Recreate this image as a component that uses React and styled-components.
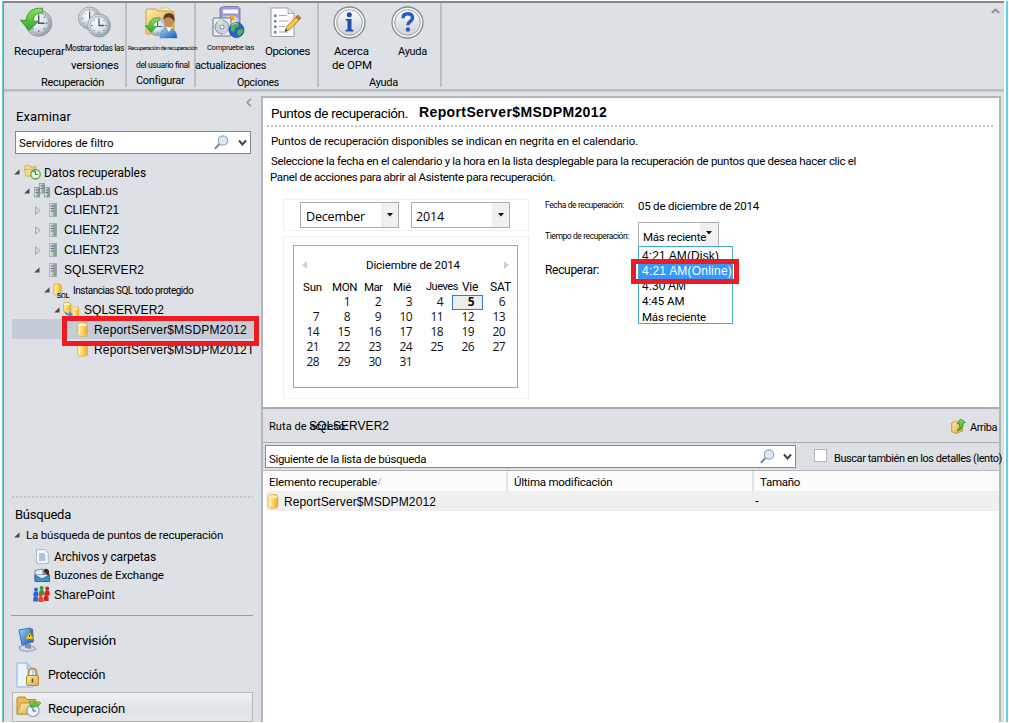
import React from "react";
import styled, { createGlobalStyle, css } from "styled-components";

const Global = createGlobalStyle`
  * { box-sizing: border-box; }
  html, body { margin: 0; padding: 0; background: #fff; overflow: hidden; }
  body { font-family: Roboto, "Liberation Sans", sans-serif; color: #000; }
  svg { display: block; flex: none; }
`;

const FONTS = {
  a: '"Liberation Sans", sans-serif',
  o: '"Open Sans", sans-serif',
  r: 'Roboto, sans-serif',
};

/* One line of text: $s size, $w reserved width, $ls tracking, $x / $y margins */
const T = styled.span`
  display: block; flex: none; white-space: nowrap;
  font-family: ${p => FONTS[p.$f || "r"]};
  font-size: ${p => p.$s || 12}px;
  font-weight: ${p => p.$b ? 700 : 400};
  letter-spacing: ${p => p.$ls || 0}px;
  height: ${p => p.$h || 16}px; line-height: ${p => p.$h || 16}px;
  margin-left: ${p => p.$x || 0}px; margin-top: ${p => p.$y || 0}px;
  width: ${p => p.$w}px;
`;

const Frame = styled.div`
  width: 1009px; height: 722px; padding: 1px 3px 0 2px; background: #fff; display: flex;
`;
const Edge = styled.div`width: ${p => p.$w}px; background: ${p => p.$c}; flex: none;`;
const Win = styled.div`
  width: 1001px; height: 721px; border-left: 1px solid #8b9296; border-top: 2px solid #85898a;
  background: #dde0e5; display: flex; flex-direction: column; flex: none;
`;
const Ribbon = styled.div`display: flex; height: 86px; flex: none;`;
const Group = styled.div`
  width: ${p => p.$w}px; height: 84px; border-right: 2px solid #bcbfc3; flex: none;
`;
const Items = styled.div`display: flex; height: 70px;`;
const Item = styled.div`
  width: ${p => p.$w}px; flex: none; display: flex; flex-direction: column;
  & > svg { margin: 3px 0 0 ${p => p.$i}px; }
`;
const RibbonFold = styled.div`margin-left: auto; padding: 5px 4px;`;
const Rule = styled.div`height: 3px; background: linear-gradient(#b3b5b8, #bec0c3 60%, #cfd2d6); flex: none;`;
const Main = styled.div`display: flex; flex: 1; min-height: 0;`;
const Side = styled.div`width: 257px; flex: none; display: flex; flex-direction: column;`;
const Fold = styled.div`height: 16px; padding: 6px 0 0 242px;`;
const Combo = styled.div`
  display: flex; align-items: center; background: #fff; border: 1px solid ${p => p.$c || "#85898c"};
  width: ${p => p.$w}px; height: ${p => p.$h}px; margin-left: ${p => p.$x || 0}px; flex: none; position: relative;
`;
const FilterCombo = styled(Combo)`margin-top: 6px;`;
const Tail = styled.div`margin-left: auto; display: flex; align-items: center; gap: ${p => p.$g || 0}px; padding-right: ${p => p.$p || 0}px;`;
const DropCell = styled.div`
  margin-left: auto; width: 17px; height: 100%; background: #f0f0f0;
  display: flex; align-items: center; justify-content: center;
`;
const TimeCell = styled(DropCell)`margin-left: -6px; width: 18px; padding-bottom: 3px;`;
const OverText = styled(T)`position: relative; z-index: 1;`;
const Tree = styled.div`margin-top: 9px; height: 333px; flex: none;`;
const Row = styled.div`
  height: ${p => p.$h || 20}px; display: flex; align-items: center; padding-left: ${p => p.$p}px; position: relative; flex: none;
  ${p => p.$sel && css`background: #c5ccd8; margin-left: 8px; padding-left: ${p.$p - 8}px; margin-right: 3px;`}
  ${p => p.$clip && css`overflow: hidden; margin-right: 8px;`}
`;
const RedBox = styled.div`
  position: absolute; border: 5px solid #ed1c24; z-index: 2;
  left: ${p => p.$l}px; top: ${p => p.$t}px; width: ${p => p.$w}px; height: ${p => p.$h}px;
`;
const Dots = styled.div`
  height: 2px; flex: none; margin: ${p => p.$m};
  background: repeating-linear-gradient(90deg, #c3c3c6 0 2px, transparent 2px 4px);
`;
const Line = styled.div`height: 1px; background: #999b9e; margin: ${p => p.$m}; flex: none;`;
const Nav = styled.div`
  height: ${p => p.$h || 34}px; margin: 0 8px 0 8px; display: flex; align-items: center; padding-left: ${p => p.$on ? 3 : 4}px; flex: none;
  ${p => p.$on && css`border: 1px solid #b4b8bd; background: linear-gradient(#f0f2f4, #dfe2e6 60%, #e6e8eb);`}
`;
const Panel = styled.div`
  margin-top: 4px; width: 740px; border: solid #b2b5ba; border-width: 2px 2px 0 2px; background: #fff;
  display: flex; flex-direction: column; flex: none;
`;
const Title = styled.div`height: 27px; display: flex; align-items: center; flex: none;`;
const Detail = styled.div`height: 210px; display: flex; flex: none; margin-top: 12px;`;
const DateCol = styled.div`width: 246px; margin: 2px 0 0 20px; display: flex; flex-direction: column; gap: 5px; flex: none;`;
const Soft = styled.div`border: 1px solid #f0f0f0; height: ${p => p.$h}px; padding: ${p => p.$p}; display: flex; gap: 12px;`;
const Cal = styled.div`width: 225px; height: 143px; border: 1px solid #a5a5a5; padding-top: 11px;`;
const CalHead = styled.div`display: flex; align-items: center; height: 16px; padding: 0 8px;`;
const Week = styled.div`display: flex; height: 16px; margin-top: 6px; padding-left: 9px;`;
const Days = styled.div`
  display: grid; grid-template-columns: repeat(7, 31px); grid-auto-rows: 15px; margin-left: 2px;
`;
const Day = styled.div`
  font: 400 12px/14px "Open Sans", sans-serif; letter-spacing: -.6px; text-align: right; padding-right: 8px; color: #111;
  ${p => p.$on && css`font-weight: 700; border: 1px solid #2b7fd3; background: #eee; line-height: 12px; padding-right: 8px; margin: 0 -1px 0 1px;`}
`;
const Form = styled.div`margin-left: 16px; display: flex; flex-direction: column;`;
const Field = styled.div`display: flex; height: ${p => p.$h}px; align-items: flex-start;`;
const List = styled.div`
  position: absolute; left: -1px; top: 23px; width: 95px; height: 78px; border: 1px solid #45a9cb; background: #fff; padding-top: 2px; z-index: 1;
`;
const Opt = styled.div`
  height: 15px; display: flex; padding-left: 3px; ${p => p.$on && css`background: #3399ff; color: #fff;`}
`;
const PathBar = styled.div`
  height: 36px; flex: none; border-top: 2px solid #a9abae; border-bottom: 1px solid #a9abb0; background: #dde0e5;
  display: flex; align-items: center;
`;
const SearchBar = styled.div`height: 28px; flex: none; background: #dde0e5; display: flex; align-items: center; padding-left: 2px; border-bottom: 1px solid #b4b7bb;`;
const Check = styled.div`width: 13px; height: 13px; border: 1px solid #b4b7ba; background: #fff; margin: -3px 0 0 18px; flex: none;`;
const Grid = styled.div`
  display: grid; grid-template-columns: 245px 246px 1fr; height: 20px; flex: none; align-items: center;
  background: ${p => p.$bg}; ${p => p.$m && css`margin-left: 3px; grid-template-columns: 242px 246px 1fr;`}
`;
const Cell = styled.div`height: 100%; display: flex; align-items: center; border-right: ${p => p.$l ? "2px solid #e2e2e2" : 0};`;
const Gap = styled.div`width: ${p => p.$w}px; flex: none;`;
const Defs = styled.svg`position: absolute;`;

/* ---------- icons ---------- */
const Grads = () => (
  <Defs width="0" height="0">
    <defs>
      <radialGradient id="face" cx=".4" cy=".35" r=".75"><stop offset="0" stopColor="#fff" /><stop offset=".6" stopColor="#d9e2ea" /><stop offset="1" stopColor="#a9b6c1" /></radialGradient>
      <linearGradient id="rim" x2="1" y2="1"><stop stopColor="#eef0f2" /><stop offset="1" stopColor="#8b959d" /></linearGradient>
      <linearGradient id="grn" x2="0" y2="1"><stop stopColor="#8fe05a" /><stop offset="1" stopColor="#36a52c" /></linearGradient>
      <linearGradient id="fold" x2="1" y2="1"><stop stopColor="#fdeaa6" /><stop offset="1" stopColor="#e0a93e" /></linearGradient>
      <linearGradient id="cyl" x2="1" y2="0"><stop stopColor="#fff0a8" /><stop offset=".45" stopColor="#ffd96f" /><stop offset="1" stopColor="#f2a82c" /></linearGradient>
      <linearGradient id="srv" x2="1" y2="0"><stop stopColor="#eef1f3" /><stop offset="1" stopColor="#7f8a94" /></linearGradient>
      <linearGradient id="blu" x2="1" y2="1"><stop stopColor="#9ed8ff" /><stop offset="1" stopColor="#1557b8" /></linearGradient>
      <linearGradient id="btn" x2="0" y2="1"><stop stopColor="#fff" /><stop offset=".5" stopColor="#e2e5e8" /><stop offset="1" stopColor="#cfd4d8" /></linearGradient>
    </defs>
  </Defs>
);
const Clock = ({ x = 0, y = 0, k = 1 }) => (
  <g transform={`translate(${x} ${y}) scale(${k})`}>
    <circle cx="12" cy="12" r="11.5" fill="url(#rim)" stroke="#8b959e" strokeWidth=".8" />
    <circle cx="12" cy="12" r="9" fill="url(#face)" stroke="#98a4ae" strokeWidth=".7" />
    <path d="M12 4.2v1.6M12 18.2v1.6M4.2 12h1.6M18.2 12h1.6M6.5 6.5l1 1M17.5 17.5l-1-1M17.5 6.5l-1 1M6.5 17.5l1-1" stroke="#66717b" strokeWidth="1" />
    <path d="M12 5.8V12h5.2" fill="none" stroke="#47566a" strokeWidth="1.3" />
  </g>
);
const GreenArrow = ({ x = 0, y = 0, k = 1 }) => (
  <path transform={`translate(${x} ${y}) scale(${k})`} d="M20.5 1.2C11 .4 6.5 4.5 5.6 12.2L.4 12l7.8 9.4L17 12.9l-5.2-.2c.3-4.4 2.8-7.3 8.9-7.6z" fill="url(#grn)" stroke="#238a1d" strokeWidth=".7" />
);
const IcoRecover = () => <svg width="33" height="33"><Clock x={5} y={3.5} k={1.14} /><GreenArrow x={0} y={1} k={1.1} /></svg>;
const IcoClocks = () => <svg width="34" height="33"><Clock x={0} y={.5} k={.97} /><Clock x={9} y={7.5} k={1} /></svg>;
const IcoUserFolder = () => (
  <svg width="34" height="33">
    <path d="M2 5q0-2 2-2h8l2 2h14q2 0 2 2v21H2z" fill="url(#fold)" stroke="#d2a045" />
    <path d="M15 2h9l2 3" fill="#fff3c4" stroke="#dfb558" strokeWidth=".8" />
    <Clock x={4} y={11} k={.8} /><GreenArrow x={1} y={11} k={.72} />
    <path d="M16 32q0-9 8-10 9 1 9 10z" fill="url(#blu)" stroke="#4a7faa" strokeWidth=".5" />
    <path d="M22 21l3 5 3-5z" fill="#fff" />
    <ellipse cx="25" cy="15" rx="5" ry="6.5" fill="#c98d58" />
    <path d="M19.5 14q-.5-7 5.5-7 6.500 0 5.500 9-2-4-6-5-3 0-5 3z" fill="#5d3a22" />
  </svg>
);
const IcoUpdate = () => (
  <svg width="34" height="33">
    <path d="M9 2l4-1.500h14l2 2v17H9z" fill="#9a9fcd" stroke="#6a6fa6" strokeWidth=".8" /><path d="M12 3.500h15v4H12z" fill="#f4f6ff" />
    <path d="M11 9h12l5 3v10H11z" fill="#c4c9e4" stroke="#7478ab" strokeWidth=".6" /><path d="M17 10h7l1 8h-6z" fill="#f6e4b4" /><circle cx="21" cy="12" r="2.800" fill="#e9a83c" />
    <rect x="2" y="12" width="18" height="18" rx="1" fill="#eceff4" stroke="#6c7280" />
    <circle cx="11" cy="21" r="7" fill="#c5cfda" stroke="#858f9b" /><path d="M11 21l-5-5a7 7 0 0 1 6-2z" fill="#c6eccb" /><path d="M11 21l6 4a7 7 0 0 1-5 3z" fill="#e6c8e8" /><circle cx="11" cy="21" r="2" fill="#fff" stroke="#7a8490" />
    <circle cx="25.500" cy="24" r="7.500" fill="#2a62c8" stroke="#1b428f" strokeWidth=".7" />
    <path d="M20 20q4-4 7-3l1 3-4 2-1 4-3-1zM27 24l5-1q0 5-4 7l-2-3z" fill="#50b848" /><path d="M20 19.500q3-3 6-2" stroke="#a9cdf9" fill="none" />
  </svg>
);
const IcoOptions = () => (
  <svg width="34" height="33">
    <path d="M3 2h17l6 5v23.500H3z" fill="#fdfdfe" stroke="#9aa2ab" /><path d="M20 2v5.500h6" fill="#dfe4ea" stroke="#9aa2ab" strokeWidth=".8" />
    <path d="M11 9.500h8M11 15h9M11 20.500h6M11 26h9" stroke="#a4acb5" strokeWidth="1.200" />
    <path d="M6 8.500h2.500v2.500H6zM6 14h2.500v2.500H6zM6 19.500h2.500v2.500H6zM6 25h2.500v2.500H6z" fill="#7580a0" />
    <path d="M17 25.500l1.800-5L29.500 9.500l3 3L22 23.500z" fill="#f4c64c" stroke="#99712a" strokeWidth=".8" />
    <path d="M28 11l1.800-2 3 3-1.900 2z" fill="#d86a5c" stroke="#8f4038" strokeWidth=".5" /><path d="M17 25.500l.8-2.400 1.600 1.500z" fill="#222" />
  </svg>
);
const RoundBtn = ({ children }) => (
  <svg width="33" height="33">
    <circle cx="16.500" cy="16.500" r="15.500" fill="#f4f5f6" stroke="#878b8f" strokeWidth="1.300" />
    <circle cx="16.500" cy="16.500" r="12.800" fill="url(#btn)" stroke="#9ba0a5" />{children}
  </svg>
);
const IcoInfo = () => <RoundBtn><circle cx="16.300" cy="8.800" r="2.500" fill="#1f4fae" /><path d="M12.800 13h5.700v10.800h1.900v1.700h-7.800v-1.700h1.900v-9.100h-1.700z" fill="#1f4fae" /></RoundBtn>;
const IcoHelp = () => <RoundBtn><path d="M12 12.300q0-4.500 4.700-4.500 4.800 0 4.800 4 0 2.300-2.700 3.900-1.900 1.100-1.900 3.600" fill="none" stroke="#2a5cbc" strokeWidth="3.400" /><circle cx="16.900" cy="23.500" r="2.200" fill="#2a5cbc" /></RoundBtn>;
const Mag = () => (
  <svg width="15" height="15"><path d="M6 8.500L1.400 13.300" stroke="#85898e" strokeWidth="2" strokeLinecap="round" /><circle cx="9" cy="5.500" r="4.700" fill="#dcebfa" stroke="#9aaabb" strokeWidth="1.200" /></svg>
);
const Chev = () => <svg width="9" height="8"><path d="M1 1.500l3.500 4 3.500-4" fill="none" stroke="#3f4347" strokeWidth="2" /></svg>;
const Down = () => <svg width="6" height="4"><path d="M0 0h6L3 3.600z" fill="#111" /></svg>;
const Tri = ({ open }) => open
  ? <svg width="6" height="6"><path d="M5.500 .3v5.200H.2z" fill="#4a4a4a" /></svg>
  : <svg width="6" height="9"><path d="M.6 .9v7.200l4.300-3.600z" fill="none" stroke="#a0a3a7" /></svg>;
const Server = () => (
  <svg width="8" height="14"><rect x=".5" y=".5" width="7" height="13" fill="url(#srv)" stroke="#8b959d" strokeWidth=".6" /><path d="M1.500 3h4M1.500 5.500h4M1.500 8h4" stroke="#69737b" /><rect x="4.500" y="10.500" width="2.500" height="2" fill="#4ed02c" /></svg>
);
const Domain = () => (
  <svg width="16" height="15">
    {[[5.5, 0], [.5, 4], [10.5, 4]].map(([x, y], i) => <g key={i} transform={`translate(${x} ${y})`}><rect x="0" y=".5" width="5" height="9.500" fill="url(#srv)" stroke="#75808a" strokeWidth=".6" /><path d="M1 3h3M1 5.500h3" stroke="#69737b" /><rect x="2.500" y="7.800" width="2" height="1.700" fill="#4ed02c" /></g>)}
  </svg>
);
const FolderClock = () => (
  <svg width="17" height="16"><path d="M.6 3q0-1.500 1.500-1.500h3l1.200 1.300H12V12H2z" fill="url(#fold)" stroke="#cf9a3c" strokeWidth=".7" /><path d="M.6 5.500h9L12 12H2z" fill="#fbd97f" stroke="#cf9a3c" strokeWidth=".5" /><circle cx="11.500" cy="10.300" r="4.700" fill="#e4f2e0" stroke="#5f9d4f" strokeWidth="1.300" /><path d="M11.500 7.500v3h2.300" fill="none" stroke="#3f7a34" /><path d="M7 8l5-2.500-.5 3z" fill="#49b038" /></svg>
);
const CYL = "M.6 2.800q0-2.200 4.900-2.200t4.900 2.200v9.400q0 2.200-4.900 2.200T.6 12.200z";
const Cyl = ({ w = 11, h = 15 }) => (
  <svg width={w} height={h} viewBox="0 0 11 15"><path d={CYL} fill="url(#cyl)" stroke="#e5a437" strokeWidth=".7" /><ellipse cx="5.500" cy="2.700" rx="4.300" ry="1.500" fill="#fff2b8" /><path d="M2.500 5.500v7" stroke="#fff6cf" strokeWidth="1.200" /></svg>
);
const SqlIco = () => (
  <svg width="17" height="15"><path d="M.8 2.200q0-1.500 3.700-1.500t3.700 1.500v8.500q0 1.500-3.700 1.500T.8 10.700z" fill="url(#cyl)" stroke="#dc9a2a" strokeWidth=".7" /><text x="3.800" y="14.500" fontFamily="Liberation Sans" fontWeight="700" fontSize="6.800" textLength="12.800" stroke="#dde0e5" strokeWidth="1" paintOrder="stroke" fill="#111">SQL</text></svg>
);
const DbPair = () => (
  <svg width="17" height="15"><g transform="scale(.76)"><path d={CYL} fill="url(#cyl)" stroke="#e5a437" /><ellipse cx="5.500" cy="2.800" rx="4" ry="1.400" fill="#fff2b8" /></g><g transform="translate(8.500 4.500) scale(.7)"><path d={CYL} fill="url(#cyl)" stroke="#e5a437" /><ellipse cx="5.500" cy="2.800" rx="4" ry="1.400" fill="#fff2b8" /></g><path d="M1.500 8q1 4 5 3.500v-2l3.500 3-3.500 2.500v-1.500Q1 13.500 1.500 8z" fill="#2f8fdf" /></svg>
);
const DocIco = () => <svg width="13" height="15"><path d="M.6 .6h8l3.600 3.400v10.400H.6z" fill="#fafcff" stroke="#9aa7b8" strokeWidth=".8" /><path d="M3 5h6M3 7h6.500M3 9h6.500M3 11h6.500" stroke="#5a8ed0" /></svg>;
const MailIco = () => <svg width="17" height="15"><path d="M1 2.500L9 1v11l-8 .5z" fill="#e7eef5" stroke="#56708c" strokeWidth=".8" /><path d="M1 7h14.500v6.500H1z" fill="#4a90c8" stroke="#1f5077" strokeWidth=".8" /><path d="M1 7l7 4 7-4" fill="#d8ebf8" stroke="#1f5077" strokeWidth=".7" /><circle cx="12" cy="3.700" r="2.800" fill="#a9764f" /><path d="M9.500 2.500Q12-1 15 3v4h-1.500" fill="#35281f" /></svg>;
const People = () => (
  <svg width="17" height="16">
    {[["#d42020", 11.8, .5], ["#2f9e2f", 6.2, 0], ["#2e62d8", .6, 1.5], ["#2e62d8", .2, 6.5], ["#e2481a", 5.4, 7], ["#d42020", 10.8, 6]].map(([c, x, y], i) => <g key={i} transform={`translate(${x} ${y})`} fill={c}><circle cx="2.400" cy="2" r="2" /><path d="M0 9V5.500q0-1.700 2.400-1.700T4.800 5.500V9z" /></g>)}
  </svg>
);
const UpIco = () => <svg width="15" height="16"><path d="M.7 5l4-2 1 1h5l1 9-7 2.500-4-2z" fill="url(#fold)" stroke="#b98b2c" strokeWidth=".8" /><path d="M6 13q4-3 2.500-7.500L6 6l3.500-5 5 3.500-2.500.5q1.500 5-6 8z" fill="url(#grn)" stroke="#1d7a19" strokeWidth=".7" /></svg>;
const NavMon = () => <svg width="24" height="26"><path d="M3 20q8-4 15 0l2 2q-7 4-16 1z" fill="#d4d9e6" stroke="#7b819c" strokeWidth=".8" /><path d="M9 16l6 1v5l-6-1z" fill="#8490ae" /><path d="M3 3l11-2 2 14-10 3z" fill="url(#blu)" stroke="#3a6cb8" /><path d="M14 1l3 1 1 13-2 1z" fill="#5a6f98" /><path d="M13.500 5l4 7h-8z" fill="#ffd52d" stroke="#b08a10" strokeWidth=".7" /><path d="M13.500 7.500v2.500" stroke="#333" /></svg>;
const NavLock = () => <svg width="24" height="26"><path d="M1 1h10l6 6v18H1z" fill="#eaf3ff" stroke="#8db2de" /><path d="M11 1v6h6" fill="#bcd6f5" stroke="#8db2de" strokeWidth=".8" /><path d="M12.500 14v-3q0-4.500 4-4.500t4 4.500v3" fill="none" stroke="#c09a4a" strokeWidth="2.200" /><rect x="10.500" y="13.500" width="12" height="10" rx="1.500" fill="url(#fold)" stroke="#b88b32" /><path d="M16.500 16.500v4" stroke="#6b4a10" strokeWidth="1.600" /></svg>;
const NavRec = () => <svg width="26" height="24"><path d="M1 4q0-2 2-2h6l2 2.500h9V19H1z" fill="#e9bd58" stroke="#b98b2c" /><path d="M1 19L5 8h18l-4 11z" fill="url(#fold)" stroke="#b98b2c" strokeWidth=".8" /><circle cx="17" cy="15.500" r="6" fill="#eef4fa" stroke="#8fa2b8" strokeWidth="1.200" /><path d="M17 12v4h3" fill="none" stroke="#3c5d85" /><path d="M13 6l6 .5-1.500 2Q21 9 22.500 6L25 8q-3 5-8.500 3.500L15 13z" fill="url(#grn)" stroke="#238a1d" strokeWidth=".5" /></svg>;

/* name, width, left margin, size, tracking */
const WEEK = [
  ["Sun", 19, 0, 11.5, -.17], ["MON", 25, 10, 11.5, -.39], ["Mar", 18, 7, 11.5, -.6], ["Mié", 18, 11, 11.5, -.32],
  ["Jueves", 32, 15, 11, -.45], ["Vie", 16, 4, 12, -.31], ["SAT", 21, 12, 12, -.12],
];
const CLIENTS = ["CLIENT21", "CLIENT22", "CLIENT23"];

export default function App() {
  return (
    <Frame>
      <Global /><Grads />
      <Edge $w={1} $c="#6fc9dc" />
      <Win>
        <Ribbon>
          <Group $w={123}>
            <Items>
              <Item $w={61} $i={16}><IcoRecover /><T $w={51} $s={11.5} $ls={-.12} $x={10} $y={4}>Recuperar</T></Item>
              <Item $w={60} $i={13}><IcoClocks /><T $w={59} $s={8.5} $ls={-.43} $y={2} $h={14}>Mostrar todas las</T><T $w={48} $s={11.5} $ls={-.15} $x={6} $y={2}>versiones</T></Item>
            </Items>
            <T $w={63} $s={11} $ls={-.31} $x={37} $y={3} $h={14}>Recuperación</T>
          </Group>
          <Group $w={69}>
            <Items>
              <Item $w={67} $i={17}><IcoUserFolder /><T $w={69} $s={6} $ls={-.41} $x={1} $y={2} $h={14}>Recuperación de recuperación</T><T $w={53} $s={8.5} $ls={-.4} $x={9} $y={2}>del usuario final</T></Item>
            </Items>
            <T $w={48} $s={11} $ls={-.31} $x={9} $y={1} $h={14}>Configurar</T>
          </Group>
          <Group $w={123}>
            <Items>
              <Item $w={69} $i={15}><IcoUpdate /><T $w={47} $s={7.5} $ls={-.26} $x={11} $y={2} $h={14}>Compruebe las</T><T $w={71} $s={11} $ls={-.36} $x={-1} $y={3}>actualizaciones</T></Item>
              <Item $w={52} $i={3}><IcoOptions /><T $w={45} $s={11.5} $ls={-.39} $y={4}>Opciones</T></Item>
            </Items>
            <T $w={42} $s={10.5} $ls={-.25} $x={41} $y={3} $h={14}>Opciones</T>
          </Group>
          <Group $w={123}>
            <Items>
              <Item $w={60} $i={14}><IcoInfo /><T $w={35} $s={11.5} $ls={-.14} $x={15} $y={4}>Acerca</T><T $w={40} $s={11.5} $ls={-.13} $x={13} $y={-2}>de OPM</T></Item>
              <Item $w={60} $i={12}><IcoHelp /><T $w={29} $s={11} $ls={-.28} $x={19} $y={5}>Ayuda</T></Item>
            </Items>
            <T $w={29} $s={11} $ls={-.28} $x={50} $y={3} $h={14}>Ayuda</T>
          </Group>
          <RibbonFold><svg width="9" height="6"><path d="M.8 5l3.700-3.500L8.200 5" fill="none" stroke="#8c8f93" strokeWidth="1.800" /></svg></RibbonFold>
        </Ribbon>
        <Rule />
        <Main>
          <Side>
            <Fold><svg width="6" height="9"><path d="M5 .8L1.200 4.500 5 8.200" fill="none" stroke="#909397" strokeWidth="1.600" /></svg></Fold>
            <T $w={55} $s={13} $ls={.11} $x={12} $y={1}>Examinar</T>
            <FilterCombo $w={236} $h={23} $x={11}>
              <T $w={94} $s={11.5} $ls={-.08} $x={3} $y={1}>Servidores de filtro</T>
              <Tail $g={9} $p={3}><Mag /><Chev /></Tail>
            </FilterCombo>
            <Tree>
              <Row $h={18} $p={10}><Tri open /><Gap $w={4} /><FolderClock /><T $w={102} $ls={-.06} $x={3} $y={2}>Datos recuperables</T></Row>
              <Row $h={19} $p={20}><Tri open /><Gap $w={4} /><Domain /><T $w={64} $f="a" $x={4}>CaspLab.us</T></Row>
              {CLIENTS.map(c => <Row key={c} $p={31}><Tri /><Gap $w={8} /><Server /><T $w={55} $f="a" $ls={-.13} $x={7}>{c}</T></Row>)}
              <Row $p={30}><Tri open /><Gap $w={9} /><Server /><T $w={80} $f="a" $ls={.02} $x={7}>SQLSERVER2</T></Row>
              <Row $p={40}><Tri open /><Gap $w={3} /><SqlIco /><T $w={120} $s={10} $ls={-.49} $x={3} $y={1}>Instancias SQL todo protegido</T></Row>
              <Row $h={19} $p={50}><Tri open /><Gap $w={3} /><DbPair /><T $w={80} $f="a" $ls={.02} $x={4}>SQLSERVER2</T></Row>
              <Row $h={20} $p={73} $sel><Cyl /><T $w={153} $f="a" $ls={.16} $x={6} $y={2}>ReportServer$MSDPM2012</T><RedBox $l={50} $t={-3} $w={197} $h={30} /></Row>
              <Row $p={73} $clip><Cyl /><T $w={160} $f="a" $ls={.16} $x={6} $y={2}>ReportServer$MSDPM2012T</T></Row>
            </Tree>
            <Dots $m="0 8px 0 8px" />
            <T $w={56} $s={13} $ls={-.23} $x={11} $y={9}>Búsqueda</T>
            <Row $h={23} $p={10} ><Tri open /><T $w={197} $s={11.5} $ls={-.19} $x={6} $y={1}>La búsqueda de puntos de recuperación</T></Row>
            <Row $h={20} $p={32}><DocIco /><T $w={102} $ls={-.14} $x={5} $y={2}>Archivos y carpetas</T></Row>
            <Row $h={18} $p={30}><MailIco /><T $w={110} $s={11.5} $ls={-.12} $x={3}>Buzones de Exchange</T></Row>
            <Row $h={20} $p={29}><People /><T $w={61} $f="a" $ls={.16} $x={4} $y={1}>SharePoint</T></Row>
            <Line $m="11px 8px 7px 7px" />
            <Nav><NavMon /><T $w={68} $s={13.5} $ls={-.19} $x={8}>Supervisión</T></Nav>
            <Nav $h={35}><NavLock /><T $w={57} $s={12.5} $ls={-.3} $x={8}>Protección</T></Nav>
            <Nav $h={30} $on><NavRec /><T $w={77} $s={13} $ls={-.15} $x={6} $y={3}>Recuperación</T></Nav>
          </Side>
          <Panel>
            <Title><T $w={137} $s={13.5} $ls={-.37} $x={8} $y={3}>Puntos de recuperación.</T><T $w={188} $s={14} $f="a" $b $ls={.38} $x={11} $y={0}>ReportServer$MSDPM2012</T></Title>
            <Dots $m="0 6px 0 4px" />
            <T $w={367} $s={11.5} $ls={-.14} $x={8} $y={6}>Puntos de recuperación disponibles se indican en negrita en el calendario.</T>
            <T $w={585} $s={11.5} $ls={-.313} $x={8} $y={4}>Seleccione la fecha en el calendario y la hora en la lista desplegable para la recuperación de puntos que desea hacer clic el</T>
            <T $w={285} $s={11.5} $ls={-.339} $x={7}>Panel de acciones para abrir al Asistente para recuperación.</T>
            <Detail>
              <DateCol>
                <Soft $h={32} $p="2px 0 0 16px">
                  <Combo $w={99} $h={26} $c="#adadad"><T $w={59} $f="o" $ls={-.18} $x={5} $y={3} $s={12.5}>December</T><DropCell><Down /></DropCell></Combo>
                  <Combo $w={99} $h={26} $c="#adadad"><T $w={28} $f="o" $ls={-.15} $x={4} $y={3} $s={12.5}>2014</T><DropCell><Down /></DropCell></Combo>
                </Soft>
                <Soft $h={163} $p="8px 0 0 9px">
                  <Cal>
                    <CalHead><svg width="5" height="8"><path d="M5 0v8L0 4z" fill="#cfcfcf" /></svg><T $w={94} $s={11.5} $ls={-.11} $x={59}>Diciembre de 2014</T><Tail><svg width="5" height="8"><path d="M0 0v8l5-4z" fill="#cfcfcf" /></svg></Tail></CalHead>
                    <Week>{WEEK.map(([n, w, x, s, ls]) => <T key={n} $w={w} $s={s} $ls={ls} $x={x}>{n}</T>)}</Week>
                    <Days><span />{Array.from({ length: 31 }, (_, i) => <Day key={i} $on={i === 4}>{i + 1}</Day>)}</Days>
                  </Cal>
                </Soft>
              </DateCol>
              <Form>
                <Field $h={25}><T $w={79} $s={8.5} $ls={-.39}>Fecha de recuperación:</T><T $w={121} $s={11.5} $ls={-.22} $x={14} $y={1}>05 de diciembre de 2014</T></Field>
                <Field $h={40}><T $w={84} $s={8.5} $ls={-.41} $y={6}>Tiempo de recuperación:</T>
                  <Combo $w={81} $h={25} $x={9} $c="#adadad"><OverText $w={63} $s={11.5} $ls={-.26} $x={4} $y={4}>Más reciente</OverText><TimeCell><Down /></TimeCell>
                    <List>
                      <Opt><T $w={77} $f="a" $ls={.13} $h={15}>4:21 AM(Disk)</T></Opt>
                      <Opt $on><T $w={90} $f="a" $ls={.22} $h={15}>4:21 AM(Online)</T></Opt>
                      <Opt><T $w={44} $f="a" $h={15}>4:30 AM</T></Opt>
                      <Opt><T $w={43} $s={11.5} $h={15}>4:45 AM</T></Opt>
                      <Opt><T $w={64} $s={11.5} $ls={-.18} $h={15} $y={1}>Más reciente</T></Opt>
                      <RedBox $l={-8} $t={12} $w={108} $h={25} />
                    </List>
                  </Combo>
                </Field>
                <T $w={54} $ls={-.31}>Recuperar:</T>
              </Form>
            </Detail>
            <PathBar>
              <T $w={79} $s={11} $ls={.07} $x={6} $y={3}>Ruta de acceso:</T><T $w={80} $f="a" $ls={.02} $x={-39} $y={1}>SQLSERVER2</T>
              <Tail $p={2}><UpIco /><T $w={27} $s={11} $ls={-.41} $x={4} $y={4}>Arriba</T></Tail>
            </PathBar>
            <SearchBar>
              <Combo $w={531} $h={23}><T $w={157} $s={11.5} $ls={-.33} $x={3} $y={4}>Siguiente de la lista de búsqueda</T><Tail $g={8} $p={3}><Mag /><Chev /></Tail></Combo>
              <Check /><T $w={168} $s={11} $ls={-.44} $x={7} $y={4}>Buscar también en los detalles (lento)</T>
            </SearchBar>
            <Grid $bg="#fcfcfc">
              <Cell $l><T $w={108} $s={11.5} $ls={-.16} $x={6} $y={2}>Elemento recuperable</T><svg width="5" height="8"><path d="M1 8l3-7" stroke="#999" strokeWidth=".8" /></svg></Cell>
              <Cell $l><T $w={98} $s={11.5} $ls={-.23} $x={6} $y={2}>Última modificación</T></Cell>
              <Cell><T $w={40} $s={11.5} $ls={-.29} $x={6} $y={2}>Tamaño</T></Cell>
            </Grid>
            <Grid $bg="#efefef" $m>
              <Cell><Gap $w={1} /><Cyl w={12} h={15} /><T $w={152} $f="a" $ls={.12} $x={5} $y={1}>ReportServer$MSDPM2012</T></Cell>
              <Cell /><Cell><T $w={5} $f="a" $x={1}>-</T></Cell>
            </Grid>
          </Panel>
        </Main>
      </Win>
      <Edge $w={2} $c="#fff" /><Edge $w={2} $c="#5fd0ec" />
    </Frame>
  );
}
